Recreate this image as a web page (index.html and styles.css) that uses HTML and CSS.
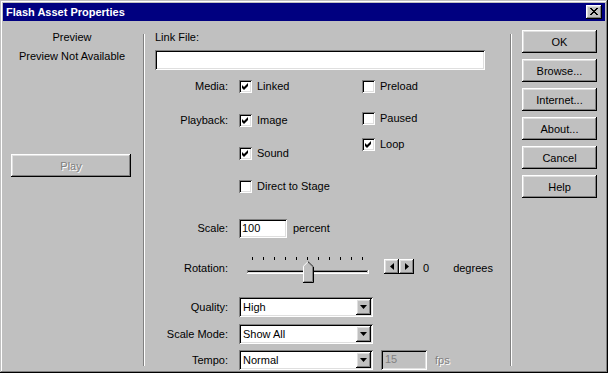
FILE: index.html
```html
<!DOCTYPE html>
<html>
<head>
<meta charset="utf-8">
<link rel="stylesheet" href="styles.css">
</head>
<body>
<div class="window">
  <div class="titlebar">
    <span class="title">Flash Asset Properties</span>
    <span class="close"><svg width="8" height="7" viewBox="0 0 8 7"><path d="M0 0h2v1h1v1h2V1h1V0h2v1H7v1H6v1H5v1h1v1h1v1h1v1H6V6H5V5H3v1H2v1H0V6h1V5h1V4h1V3H2V2H1V1H0z" fill="#000"/></svg></span>
  </div>
  <div class="content">
    <div class="left">
      <div class="txt preview-title">Preview</div>
      <div class="txt preview-na">Preview Not Available</div>
      <div class="btn play disabled">Play</div>
    </div>
    <div class="sep"></div>
    <div class="middle">
      <div class="txt">Link File:</div>
      <div class="field link-input"></div>
      <div class="checks">
        <div class="labels">
          <div class="txt lab">Media:</div>
          <div class="txt lab pb">Playback:</div>
        </div>
        <div class="check-col left-checks">
          <div class="check"><span class="box"><svg width="9" height="9" viewBox="0 0 9 9"><path d="M1 3l2 2 4-4v3l-4 4-2-2z" fill="#000"/></svg></span>Linked</div>
          <div class="check c2"><span class="box"><svg width="9" height="9" viewBox="0 0 9 9"><path d="M1 3l2 2 4-4v3l-4 4-2-2z" fill="#000"/></svg></span>Image</div>
          <div class="check c3"><span class="box"><svg width="9" height="9" viewBox="0 0 9 9"><path d="M1 3l2 2 4-4v3l-4 4-2-2z" fill="#000"/></svg></span>Sound</div>
          <div class="check c3"><span class="box"></span>Direct to Stage</div>
        </div>
        <div class="check-col right-checks">
          <div class="check"><span class="box"></span>Preload</div>
          <div class="check r2"><span class="box"></span>Paused</div>
          <div class="check r3"><span class="box"><svg width="9" height="9" viewBox="0 0 9 9"><path d="M1 3l2 2 4-4v3l-4 4-2-2z" fill="#000"/></svg></span>Loop</div>
        </div>
      </div>
      <div class="form-row scale-row">
        <span class="txt lab">Scale:</span>
        <div class="field scale-input">100</div>
        <span class="txt unit">percent</span>
      </div>
      <div class="form-row rot-row">
        <span class="txt lab rot-lab">Rotation:</span>
        <svg class="slider" width="122" height="26" viewBox="0 0 122 26">
          <g fill="#000">
            <rect x="5" y="0" width="1" height="3"/><rect x="16" y="0" width="1" height="3"/><rect x="27" y="0" width="1" height="3"/><rect x="38" y="0" width="1" height="3"/><rect x="49" y="0" width="1" height="3"/><rect x="60" y="0" width="1" height="3"/><rect x="71" y="0" width="1" height="3"/><rect x="82" y="0" width="1" height="3"/><rect x="93" y="0" width="1" height="3"/><rect x="104" y="0" width="1" height="3"/><rect x="115" y="0" width="1" height="3"/>
          </g>
          <rect x="0" y="13" width="121" height="1" fill="#808080"/>
          <rect x="0" y="14" width="1" height="2" fill="#808080"/>
          <rect x="1" y="14" width="119" height="1" fill="#000"/>
          <rect x="1" y="15" width="119" height="1" fill="#dfdfdf"/>
          <rect x="0" y="16" width="122" height="1" fill="#fff"/>
          <rect x="121" y="13" width="1" height="4" fill="#fff"/>
          <path d="M56 9 L61 4 L66 9 L66 25 L56 25 Z" fill="#c0c0c0"/>
          <path d="M56.5 24.5 L56.5 9.2 L61 4.7" stroke="#fff" stroke-width="1" fill="none"/>
          <path d="M61 4.7 L66.5 10 L66.5 25.5 L56 25.5" stroke="#000" stroke-width="1" fill="none"/>
          <path d="M61.5 5.8 L65.5 9.8 L65.5 24.5 L57 24.5" stroke="#808080" stroke-width="1" fill="none"/>
        </svg>
        <div class="spin">
          <div class="btn spin-btn"><svg width="4" height="7" viewBox="0 0 4 7"><path d="M4 0v7L0 3.5z" fill="#000"/></svg></div>
          <div class="btn spin-btn"><svg width="4" height="7" viewBox="0 0 4 7"><path d="M0 0v7l4-3.5z" fill="#000"/></svg></div>
        </div>
        <span class="txt deg-val">0</span>
        <span class="txt deg">degrees</span>
      </div>
      <div class="form-row sel-row q-row">
        <span class="txt lab">Quality:</span>
        <div class="field select"><span class="sel-text">High</span><span class="btn arrow"><svg width="7" height="4" viewBox="0 0 7 4"><path d="M0 0h7L3.5 4z" fill="#000"/></svg></span></div>
      </div>
      <div class="form-row sel-row">
        <span class="txt lab">Scale Mode:</span>
        <div class="field select"><span class="sel-text">Show All</span><span class="btn arrow"><svg width="7" height="4" viewBox="0 0 7 4"><path d="M0 0h7L3.5 4z" fill="#000"/></svg></span></div>
      </div>
      <div class="form-row sel-row t-row">
        <span class="txt lab">Tempo:</span>
        <div class="field select"><span class="sel-text">Normal</span><span class="btn arrow"><svg width="7" height="4" viewBox="0 0 7 4"><path d="M0 0h7L3.5 4z" fill="#000"/></svg></span></div>
        <div class="field fps-input">15</div>
        <span class="txt fps disabled">fps</span>
      </div>
    </div>
    <div class="sep"></div>
    <div class="right">
      <div class="btn side">OK</div>
      <div class="btn side">Browse...</div>
      <div class="btn side">Internet...</div>
      <div class="btn side">About...</div>
      <div class="btn side">Cancel</div>
      <div class="btn side">Help</div>
    </div>
  </div>
</div>
</body>
</html>
```

FILE: styles.css
```css
* { box-sizing: border-box; }
html, body { margin: 0; padding: 0; }
body {
  width: 608px;
  height: 373px;
  overflow: hidden;
  background: #c0c0c0;
  font-family: "Liberation Sans", Arial, sans-serif;
  font-size: 11px;
  color: #000;
}
.window {
  width: 608px;
  height: 373px;
  background: #c0c0c0;
  padding: 3px;
  display: flex;
  flex-direction: column;
  box-shadow: inset -1px -1px #000, inset 1px 1px #c0c0c0, inset -2px -2px #808080, inset 2px 2px #fff;
}
.titlebar {
  height: 18px;
  background: #000080;
  display: flex;
  align-items: center;
  justify-content: space-between;
  padding: 0 3px 0 3px;
  flex: none;
}
.title {
  color: #fff;
  font-weight: bold;
  font-size: 11px;
  line-height: 13px;
}
.close {
  width: 16px;
  height: 14px;
  background: #c0c0c0;
  display: flex;
  align-items: center;
  justify-content: center;
  box-shadow: inset -1px -1px #000, inset 1px 1px #fff, inset -2px -2px #808080, inset 2px 2px #dfdfdf;
  padding-bottom: 1px;
}
.close svg { display: block; }
.content {
  flex: 1;
  display: flex;
}
.txt { line-height: 13px; white-space: nowrap; }
.disabled { color: #808080; text-shadow: 1px 1px 0 #fff; }

.left {
  width: 140px;
  display: flex;
  flex-direction: column;
  align-items: center;
  padding-top: 10px;
  padding-right: 2px;
}
.preview-na { margin-top: 6px; }
.btn {
  background: #c0c0c0;
  box-shadow: inset -1px -1px #000, inset 1px 1px #fff, inset -2px -2px #808080, inset 2px 2px #dfdfdf;
  display: flex;
  align-items: center;
  justify-content: center;
}
.play {
  width: 120px;
  height: 23px;
  margin-top: 91px;
  margin-right: 2px;
}
.sep {
  width: 2px;
  margin: 13px 0 4px 0;
  border-left: 1px solid #808080;
  border-right: 1px solid #fff;
}
.middle {
  width: 365px;
  padding-left: 10px;
  padding-top: 10px;
  display: flex;
  flex-direction: column;
}
.field {
  background: #fff;
  box-shadow: inset 1px 1px #808080, inset -1px -1px #fff, inset 2px 2px #000, inset -2px -2px #dfdfdf;
}
.link-input {
  width: 330px;
  height: 20px;
  margin-top: 6px;
}
.checks {
  display: flex;
  margin-top: 10px;
}
.labels {
  width: 73px;
  display: flex;
  flex-direction: column;
  align-items: flex-end;
}
.lab { text-align: right; }
.labels .pb { margin-top: 21px; }
.check-col { display: flex; flex-direction: column; }
.left-checks { width: 123px; margin-left: 11px; }
.check {
  display: flex;
  align-items: center;
  height: 13px;
  line-height: 13px;
  white-space: nowrap;
}
.box {
  width: 13px;
  height: 13px;
  margin-right: 5px;
  flex: none;
  background: #fff;
  box-shadow: inset 1px 1px #808080, inset -1px -1px #fff, inset 2px 2px #000, inset -2px -2px #dfdfdf;
  display: flex;
  align-items: center;
  justify-content: center;
}
.box svg { display: block; }
.left-checks .c2 { margin-top: 21px; }
.left-checks .c3 { margin-top: 20px; }
.right-checks .r2 { margin-top: 19px; }
.right-checks .r3 { margin-top: 13px; }

.form-row {
  display: flex;
  align-items: center;
}
.form-row .lab { width: 73px; flex: none; }
.scale-row { margin-top: 26px; height: 19px; }
.scale-input {
  width: 48px;
  height: 19px;
  margin-left: 11px;
  padding: 3px 0 0 3px;
  line-height: 13px;
}
.unit { margin-left: 6px; }
.rot-row { margin-top: 19px; height: 26px; align-items: flex-start; }
.rot-lab { margin-top: 5px; }
.slider { display: block; margin-left: 19px; flex: none; }
.spin {
  display: flex;
  margin-left: 15px;
  margin-top: 2px;
}
.spin-btn { width: 15px; height: 15px; }
.spin-btn svg { display: block; }
.deg-val { margin-left: 9px; margin-top: 5px; }
.deg { margin-left: 24px; margin-top: 5px; }
.sel-row { height: 20px; margin-top: 7px; }
.q-row { margin-top: 14px; }
.t-row { margin-top: 6px; }
.select {
  width: 134px;
  height: 20px;
  margin-left: 11px;
  display: flex;
  align-items: center;
  justify-content: space-between;
  padding: 2px 2px 2px 4px;
}
.sel-text { line-height: 13px; }
.arrow { width: 15px; height: 16px; }
.arrow svg { display: block; }
.fps-input {
  width: 46px;
  height: 20px;
  margin-left: 8px;
  background: #c0c0c0;
  color: #808080;
  padding: 3px 0 0 4px;
  line-height: 13px;
}
.fps { margin-left: 8px; }
.right {
  padding-left: 10px;
  padding-top: 9px;
  display: flex;
  flex-direction: column;
  gap: 6px;
}
.side {
  width: 75px;
  height: 23px;
}
```
